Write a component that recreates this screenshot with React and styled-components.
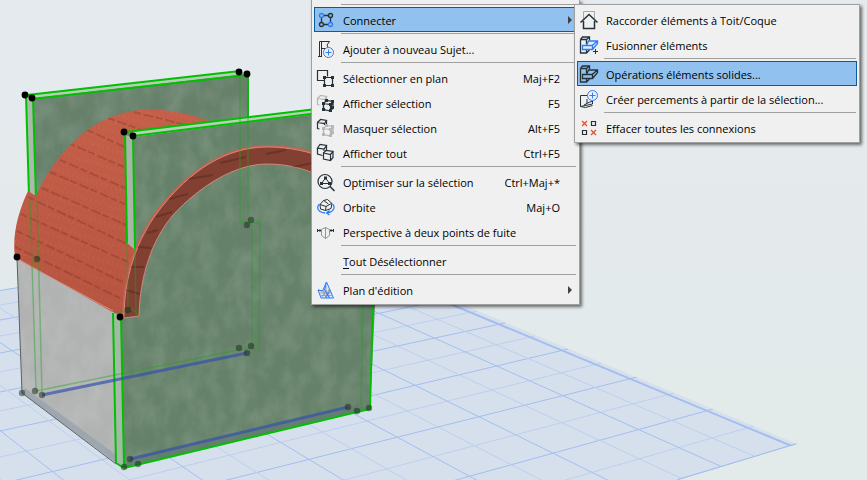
import React from 'react';
import styled, { createGlobalStyle } from 'styled-components';

const colors = {
    sky: '#e4eaec',
    menu: '#f0f0f0',
    border: '#a0a0a0',
    text: '#000',
    active: '#90c1ef',
    activeBorder: '#0a5a9e',
    ink: '#26323a',
    blue: '#2f7df6',
    muted: '#b4b6b8',
    red: '#f04a26',
    edge: '#00c000'
}

const menu = [
    { sep: true },
    { label: 'Connecter', icon: ConnectIcon, arrow: true, active: true, sub: true },
    { sep: true },
    { label: 'Ajouter à nouveau Sujet...', icon: FlagIcon },
    { sep: true },
    { label: 'Sélectionner en plan', icon: SelectPlanIcon, keys: 'Maj+F2' },
    { label: 'Afficher sélection', icon: ShowSelectionIcon, keys: 'F5' },
    { label: 'Masquer sélection', icon: HideSelectionIcon, keys: 'Alt+F5' },
    { label: 'Afficher tout', icon: ShowAllIcon, keys: 'Ctrl+F5' },
    { sep: true },
    { label: <>Opt<u>i</u>miser sur la sélection</>, icon: FitIcon, keys: 'Ctrl+Maj+*' },
    { label: 'Orbite', icon: OrbitIcon, keys: 'Maj+O' },
    { label: 'Perspective à deux points de fuite', icon: PerspectiveIcon },
    { sep: true },
    { label: <><u>T</u>out Désélectionner</> },
    { sep: true },
    { label: "Plan d'édition", icon: PlaneIcon, arrow: true }
]

const submenu = [
    { label: 'Raccorder éléments à Toit/Coque', icon: RoofIcon },
    { label: 'Fusionner éléments', icon: MergeIcon },
    { sep: true },
    { label: 'Opérations éléments solides...', icon: SolidIcon, active: true },
    { label: 'Créer percements à partir de la sélection...', icon: OpeningIcon },
    { sep: true },
    { label: 'Effacer toutes les connexions', icon: ClearIcon }
]

export default function App() {
    return (
        <Viewport>
            <GlobalStyle />
            <Scene />
            <ContextMenu aria-label='Menu contextuel'>
                <Entries items={menu} />
            </ContextMenu>
        </Viewport>
    );
}

function Entries({ items }) {
    return items.map((item, index) => (
        item.sep ? <Separator key={index} role='separator' /> : (
            <Entry key={index}>
                <Command type='button' $active={item.active}>
                    <Glyph viewBox='0 0 20 25' aria-hidden='true'>{item.icon && <item.icon />}</Glyph>
                    <Label>{item.label}</Label>
                    <Keys>{item.keys}</Keys>
                    {item.arrow && <Arrow />}
                </Command>
                {item.sub && (
                    <SubMenu aria-label='Connecter'>
                        <Entries items={submenu} />
                    </SubMenu>
                )}
            </Entry>
        )
    ))
}

/* ---------- icons ---------- */

function ConnectIcon() {
    return (
        <>
            <path d='M7.5 8.5h5M5.5 10.5v5M14.5 10.5v5M7.5 17.5h5' strokeWidth='1.300' />
            <g strokeWidth='1.400'>
                <circle cx='5.5' cy='8.5' r='2' stroke={colors.blue} />
                <circle cx='14.5' cy='8.5' r='2' />
                <circle cx='5.5' cy='17.5' r='2' />
                <circle cx='14.5' cy='17.5' r='2' stroke={colors.blue} />
            </g>
        </>
    )
}

function FlagIcon() {
    return (
        <>
            <path d='M3.500 21V5.500h10l-2.500 3.500 1.500 3.500h-7M5.500 5.500v15M2 20.500h4' />
            <Plus x={12.5} y={16.5} />
        </>
    )
}

function Plus({ x, y }) {
    return (
        <>
            <circle cx={x} cy={y} r='5' fill={colors.menu} stroke={colors.blue} />
            <path d={`M${x - 3} ${y}h6M${x} ${y - 3}v6`} stroke={colors.blue} />
        </>
    )
}

function SelectPlanIcon() {
    return (
        <>
            <path d='M8 15.500H1.500v-10h10v6' strokeWidth='1.200' />
            <path d='M8.500 12.500h8v8h-8z' strokeWidth='1.200' />
            <path d='M7 11h3v3H7zM15 11h3v3h-3zM7 19h3v3H7zM15 19h3v3h-3z' fill={colors.ink} stroke='none' />
        </>
    )
}

function Cube({ x, y, color = colors.ink, nodes }) {
    return (
        <g transform={`translate(${x} ${y})`} stroke={color} strokeWidth='1.200'>
            <path d='M.5 3.500 3.500 .5l6 1-2 3-7-1v6l2 .500M7.500 4.500V6M9.500 1.500V5' />
            {nodes && (
                <>
                    <path d='M.5 3.500v6l7 1.500V4.500M7.500 11l2.500-3V1.500' />
                    <path d='M-1 2h3v3h-3zM2-1h3v3H2zM8 0h3v3H8zM6 3h3v3H6zM-1 8h3v3h-3zM6 9h3v3H6zM8 6h3v3H8z' fill={color} stroke='none' />
                </>
            )}
        </g>
    )
}

function ShowSelectionIcon() {
    return <><Cube x={1} y={5} color={colors.muted} /><Cube x={7} y={10} nodes /></>
}

function HideSelectionIcon() {
    return <><Cube x={1} y={4} /><Cube x={7} y={10} color={colors.muted} nodes /></>
}

function ShowAllIcon() {
    return (
        <>
            <path d='M1.500 8 4 4.500l6.500 1-2.500 3.500zv6l5 1.500M10.500 5.500V10M8 9v2' strokeWidth='1.200' />
            <path d='M7.500 13 10 10.500l7 1-2.500 3-7-1.500v6l7 1.500v-6M17 11.500v6l-2.500 3' fill={colors.menu} strokeWidth='1.200' />
        </>
    )
}

function FitIcon() {
    return (
        <>
            <circle cx='9' cy='12.500' r='7' strokeWidth='1.200' />
            <path d='m14 17.500 4.500 4.500' strokeWidth='1.600' />
            <path d='m9.500 9-4 5.500h8z' />
            <path d='M8 7.500h3v3H8zM4 13h3v3H4zM12 13h3v3h-3z' fill={colors.ink} stroke='none' />
        </>
    )
}

function OrbitIcon() {
    return (
        <>
            <path d='M4 10.500 7.500 6.500l4-1 4.500 4-1 5-5.500 2L4.500 15zM4 10.500l6 2 5.500-3M10 12.500l-.5 4M7.500 6.500l5 3.500' />
            <path d='M3.500 10C1 12 1 15.500 4 17.500q2 1.300 5 1.500M16.500 10c2.500 2 2 5.500-1 7.500q-1.500 1-4 1.500M13.500 16.500l-3 2.500 3 2' stroke={colors.blue} strokeWidth='1.300' />
        </>
    )
}

function PerspectiveIcon() {
    return (
        <>
            <path d='M9.500 8v12M5.500 10.500l4-2 4 2v6l-4 3-4-3z' stroke='#8f9698' />
            <path d='M5 11.500H1.500M14 11.500h3.500M1.500 10v3M17.500 10v3' />
            <path d='m1.500 11.500 3-1.500v3zM17.500 11.500l-3-1.500v3z' fill={colors.ink} stroke='none' />
        </>
    )
}

function PlaneIcon() {
    return (
        <>
            <path d='m2 13 3 8h12.500L10.500 5 6.500 14zM6.500 14l-4.500-1' fill='#e0e8f2' stroke={colors.blue} />
            <path d='M3 16h12M4 18.500h13M7 13l3 8M10 9v4l3.500 8M13 12l-4 9M10 13l-4 7' stroke='#8996a3' strokeWidth='.8' />
            <path d='m10.500 5-2 8 5 8M14 13l-4 8' stroke={colors.blue} />
        </>
    )
}

function RoofIcon() {
    return (
        <>
            <path d='M4.500 13V4.500h11V13' stroke='#a4a8aa' />
            <path d='M1.500 15.500 10 7.500l8.500 8M4.500 14v7.500h11V14' strokeWidth='1.500' />
        </>
    )
}

function Bracket({ color, fill }) {
    return (
        <>
            <path d='M1.500 7.500 3.500 5h7v3.500M1.500 7.500v13.500h6v-3M1.500 7.500h6v5M7.500 7.500l3-2.500M7.500 21l3-3' strokeWidth='1.300' />
            <path d='M3.500 13.500h4l2-4.500h9v2.500l-5 6h-10zM3.500 13.500h9.500l5.500-4.500M13.500 13.500v4' stroke={color} fill={fill} strokeWidth='1.300' />
        </>
    )
}

function MergeIcon() {
    return (
        <>
            <Bracket color={colors.blue} fill='#e4eefc' />
            <path d='M14 19.500h5M16.500 17v5' />
        </>
    )
}

function SolidIcon() {
    return <Bracket color={colors.ink} fill={colors.active} />
}

function OpeningIcon() {
    return (
        <>
            <path d='M8.500 9.500h-7v11l12-2.500v-3l-6 2.500M5 19l3-1.500V13M1.500 20.500l5 1 7-2' />
            <Plus x={13.5} y={9.5} />
        </>
    )
}

function ClearIcon() {
    return (
        <>
            <path d='m3 6 5 5M8 6l-5 5M12 15l5 5M17 15l-5 5' stroke={colors.red} strokeWidth='1.300' />
            <path d='M12.500 6.500h4v4h-4zM3.500 15.500h4v4h-4z' strokeWidth='1.200' />
        </>
    )
}

/* ---------- 3D view ---------- */

// lines running away to the left: height on the left side, end point on the right edge
const gridAcross = [
    [305, 329, 251, 0], [320, 349, 258, 1], [336, 372, 268, 0], [353, 396, 277, 1],
    [372, 422, 288, 0], [392, 448, 299, 1], [411, 477, 311, 0], [431, 505, 323, 1],
    [457, 535, 336, 0], [484, 568, 349, 1], [512, 601, 363, 0], [537, 637, 377, 1],
    [571, 674, 393, 0], [606, 713, 409, 1], [642, 754, 426, 0], [685, 797, 444, 1]
]
// slopes of the lines meeting at the left vanishing point
const gridDown = [0.416, 0.432, 0.4476, 0.467, 0.4916, 0.515, 0.54, 0.57, 0.6, 0.64, 0.68, 0.73, 0.783, 0.84, 0.9]
const vanish = { x: -855, y: -239 }

const tileRows = [
    'M87 130 125 147', 'M68 143 124 167', 'M60 160 125 188', 'M50 172 125 204', 'M42 188 126 225',
    'M28 197 127 244', 'M21 214 128 262', 'M17 231 127 284', 'M15 247 124 300', 'M108 118 150 133', 'M134 112 190 126'
]
const archJoints = [
    'M126 290 140 294', 'M129 267 144 267', 'M137 247 151 248', 'M147 233 158 230', 'M156 217 172 212',
    'M169 199 188 194', 'M188 179 213 175', 'M220 163 246 157', 'M266 154 286 150', 'M290 168 312 163'
]

const solidDots = [[25, 95], [32, 98], [239, 72], [247, 74], [124, 132], [133, 136], [17, 257], [120, 317]]
const fadedDots = [
    [37, 259], [128, 310], [251, 220], [247, 225], [22, 393], [35, 391], [42, 395], [239, 348], [251, 346],
    [247, 353], [348, 407], [357, 411], [369, 408], [124, 467], [130, 459], [138, 464]
]

const roof = 'M15 257C12 236 18 212 28 191L36 196C52 160 85 118 133 111C155 107 185 112 212 122L125 133 127 242 135 247 137 250 133 258 128 273 125 293 123 318z'
const archOuter = 'M124 318C124 275 138 237 160 209C190 171 225 147 268 147C290 147 310 152 325 158'
const arch = archOuter + 'V179C310 170 290 164 267 164C235 164 200 186 173 215C152 240 140 275 139 316z'

function Scene() {
    return (
        <Drawing viewBox='0 0 867 480' preserveAspectRatio='xMinYMin slice' role='img' aria-label='Vue 3D'>
            <defs>
                <linearGradient id='sky' x1='0' y1='0' x2='0' y2='1'>
                    <stop offset='0' stopColor='#e5eaee' />
                    <stop offset='1' stopColor='#e3eaea' />
                </linearGradient>
                <linearGradient id='tiles' x1='0' y1='0' x2='0' y2='1'>
                    <stop offset='0' stopColor='#c9624c' />
                    <stop offset='1' stopColor='#b95642' />
                </linearGradient>
                <clipPath id='plane'><path d='M0 290 310 241 797 444 678 480 0 685z' /></clipPath>
                <clipPath id='roofClip'><path d={roof} /></clipPath>
                <clipPath id='archClip'><path d={arch} /></clipPath>
                <pattern id='fibre' width='5' height='9' patternUnits='userSpaceOnUse' patternTransform='rotate(18)'>
                    <path d='M1 0v9M3.500 2v5' stroke='#8c3626' strokeWidth='.7' opacity='.28' />
                </pattern>
                <filter id='concrete' x='0' y='0' width='1' height='1' colorInterpolationFilters='sRGB'>
                    <feTurbulence type='fractalNoise' baseFrequency='.06 .04' numOctaves='4' seed='4' />
                    <feColorMatrix values='0 0 0 0 1  0 0 0 0 1  0 0 0 0 1  .22 0 0 0 -.07' />
                    <feComposite in2='SourceGraphic' operator='in' result='stain' />
                    <feMerge><feMergeNode in='SourceGraphic' /><feMergeNode in='stain' /></feMerge>
                </filter>
            </defs>
            <rect width='867' height='480' fill='url(#sky)' />
            <g clipPath='url(#plane)' fill='none'>
                <rect width='867' height='480' fill='#d6e0ec' />
                {gridAcross.map(([y, x2, y2, strong]) => (
                    <path key={y} d={`M0 ${y} ${x2} ${y2}`} stroke={strong ? '#a4bdf1' : '#bdceee'} />
                ))}
                {gridDown.map((slope, index) => (
                    <path
                        key={slope}
                        d={`M${vanish.x} ${vanish.y}l1800 ${1800 * slope}`}
                        stroke={index % 2 === 0 ? '#a4bdf1' : '#bdceee'}
                        strokeWidth={index === 0 ? 2 : 1}
                    />
                ))}
                <path d='M0 290 310 241M797 444 678 480' stroke='#a4bdf1' strokeWidth='2' />
            </g>

            <path d='M26 96 240 71 248 75V160L36 200 29 197z' fill='#66806a' filter='url(#concrete)' />
            <path d='M26 96 33 99 36 200 29 196z' fill='#acb9ae' />
            <path d='M33 95 240 71 247 74 34 98z' fill='#b9cbb9' />
            <path d='M26 96 29 196M33 99 36 198M27 95 240 71M32 99 247 75M248 75V122' stroke={colors.edge} strokeWidth='2' fill='none' />

            <path d='M17 258 113 310 116 463 22 393z' fill='#b0b3b2' filter='url(#concrete)' />
            <path d='M22 393 25 388 115 454 116 463z' fill='#96a0ac' opacity='.7' />
            <path d='M17 258 22 393 116 464' stroke='#5a6064' fill='none' />

            <path d='M133 136 375 107V305L370 409 124 468 121 317z' fill='#658169' filter='url(#concrete)' />
            <path d='M130 459 358 405 370 409 124 468z' fill='#607c70' opacity='.7' />
            <path d={roof} fill='url(#tiles)' />
            <path d={roof} fill='url(#fibre)' />
            <g clipPath='url(#roofClip)' fill='none' stroke='#7c3226' strokeWidth='2' strokeDasharray='7 3 10 2' opacity='.34'>
                {tileRows.map((d) => <path key={d} d={d} />)}
            </g>
            <path d='M15 258 113 311' stroke='#d88d84' />
            <path d='M125 135 133 137 135 250 127 243z' fill='#a8b5aa' />
            <path d='M133 131 375 101V106L133 137z' fill='#bbcdbb' />
            <path d='M125 132 127 243M133 137 135 249M126 132 375 102M133 136 375 106' stroke={colors.edge} strokeWidth='2' fill='none' />

            <path d={archOuter} stroke='#c9614b' strokeWidth='4' fill='none' />
            <path d={arch} fill='#804032' stroke='#d08b80' />
            <path d={arch} fill='url(#fibre)' />
            <g clipPath='url(#archClip)' fill='none' stroke='#4e211a' strokeWidth='2' opacity='.4'>
                {archJoints.map((d) => <path key={d} d={d} />)}
            </g>

            <path d='M113 312 121 316 124 468 116 463z' fill='#a6b9a8' />
            <path d='M113 313 116 463 124 468M121 317 124 467' stroke={colors.edge} strokeWidth='2' fill='none' />
            <path d='M124 468 370 409 373 300' stroke={colors.edge} strokeWidth='2' fill='none' />

            <g stroke='#21a321' strokeWidth='1.500' fill='none' opacity='.42'>
                <path d='M30 200 36 390M37 200 42 393M36 391 248 348 259 350 260 223 240 222V74M248 76V224M252 222V346' />
                <path d='M363 300 361 405M127 245 128 311M135 250 136 315M114 313l18-4 7 6' />
            </g>
            <path d='M42 395 247 353M130 459 348 407' stroke='#3450ae' strokeWidth='3' opacity='.68' />
            <g fill='#1c281e' opacity='.5'>
                {fadedDots.map(([x, y]) => <circle key={`${x}-${y}`} cx={x} cy={y} r='3.200' />)}
            </g>
            {solidDots.map(([x, y]) => <circle key={`${x}-${y}`} cx={x} cy={y} r='3.400' />)}
        </Drawing>
    )
}

/* ---------- styles ---------- */

const GlobalStyle = createGlobalStyle`
    body{
        margin: 0;
        background: ${colors.sky};
        font-family: "Open Sans", "Noto Sans", sans-serif;
        font-size: 11px;
        line-height: 16px;
        color: ${colors.text};
    }
`
const Viewport = styled.main`
    position: relative;
    height: 100vh;
    overflow: hidden;
`
const Drawing = styled.svg`
    display: block;
    width: 100%;
    height: 100%;
`
const Panel = styled.ul`
    position: absolute;
    box-sizing: border-box;
    margin: 0;
    padding: 2px;
    list-style: none;
    background: ${colors.menu};
    border: 1px solid ${colors.border};
    box-shadow: 2px 2px 3px rgba(0, 0, 0, .55);
`
const ContextMenu = styled(Panel)`
    top: 0;
    left: 311px;
    width: 269px;
    padding-top: 3px;
    border-top: none;
`
const SubMenu = styled(Panel)`
    top: -3px;
    left: calc(100% - 3px);
    width: 286px;
    z-index: 1;
`
const Entry = styled.li`
    position: relative;
`
const Separator = styled.li`
    height: 1px;
    margin: 1px 1px 2px 27px;
    background: ${colors.border};
`
const Command = styled.button`
    position: relative;
    box-sizing: border-box;
    width: 100%;
    height: 25px;
    padding: 0 16px 0 1px;
    display: flex;
    align-items: center;
    border: 1px solid ${props => props.$active ? colors.activeBorder : 'transparent'};
    background: ${props => props.$active ? colors.active : 'transparent'};
    font: inherit;
    color: inherit;
    text-align: left;
    white-space: nowrap;
`
const Glyph = styled.svg`
    flex: none;
    width: 20px;
    height: 25px;
    margin: -1px 7px -1px 0;
    fill: none;
    stroke: ${colors.ink};
`
const Label = styled.span`
    flex: 1;
    padding-top: 2px;
    u{
        text-underline-offset: 2px;
        text-decoration-skip-ink: none;
    }
`
const Keys = styled.span`
    padding-top: 2px;
`
const Arrow = styled.span`
    position: absolute;
    right: 4px;
    border: 4px solid transparent;
    border-left: 4px solid #404040;
    border-right: none;
`
